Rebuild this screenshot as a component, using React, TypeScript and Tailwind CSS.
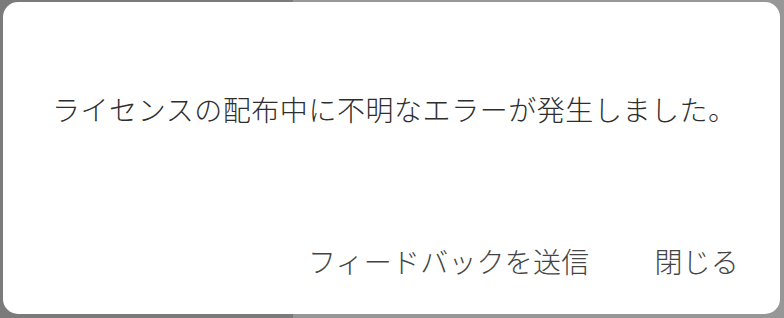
export default function App() {
  return (
    <div
      className="relative w-[784px] h-[318px] overflow-hidden"
      style={{ fontFamily: '"Noto Sans CJK JP", "Noto Sans", sans-serif' }}
    >
      {/* 背景（ダイアログの後ろ） */}
      <div className="absolute inset-0 grid grid-cols-[293px_1fr]">
        <div className="bg-[#7b7b7b]" />
        <div className="bg-[#979797]" />
      </div>

      <div className="relative pt-[2px] pl-[3px]">
        <div className="w-[777px] h-[312px] bg-white rounded-[15px] flex flex-col">
          <div className="flex-1 flex items-start pt-[88px] pl-[49px]">
            <p className="text-[28px] leading-[38px] font-light text-[#2e2e2e] tracking-[0.55px]">
              ライセンスの配布中に不明なエラーが発生しました。
            </p>
          </div>
          <div className="flex justify-end items-center gap-[65px] pr-[41px] pb-[34px]">
            <button className="text-[28px] leading-[38px] font-light text-[#444444] tracking-[0.2px]">
              フィードバックを送信
            </button>
            <button className="text-[28px] leading-[38px] font-light text-[#444444] tracking-[0.2px]">
              閉じる
            </button>
          </div>
        </div>
      </div>
    </div>
  );
}
